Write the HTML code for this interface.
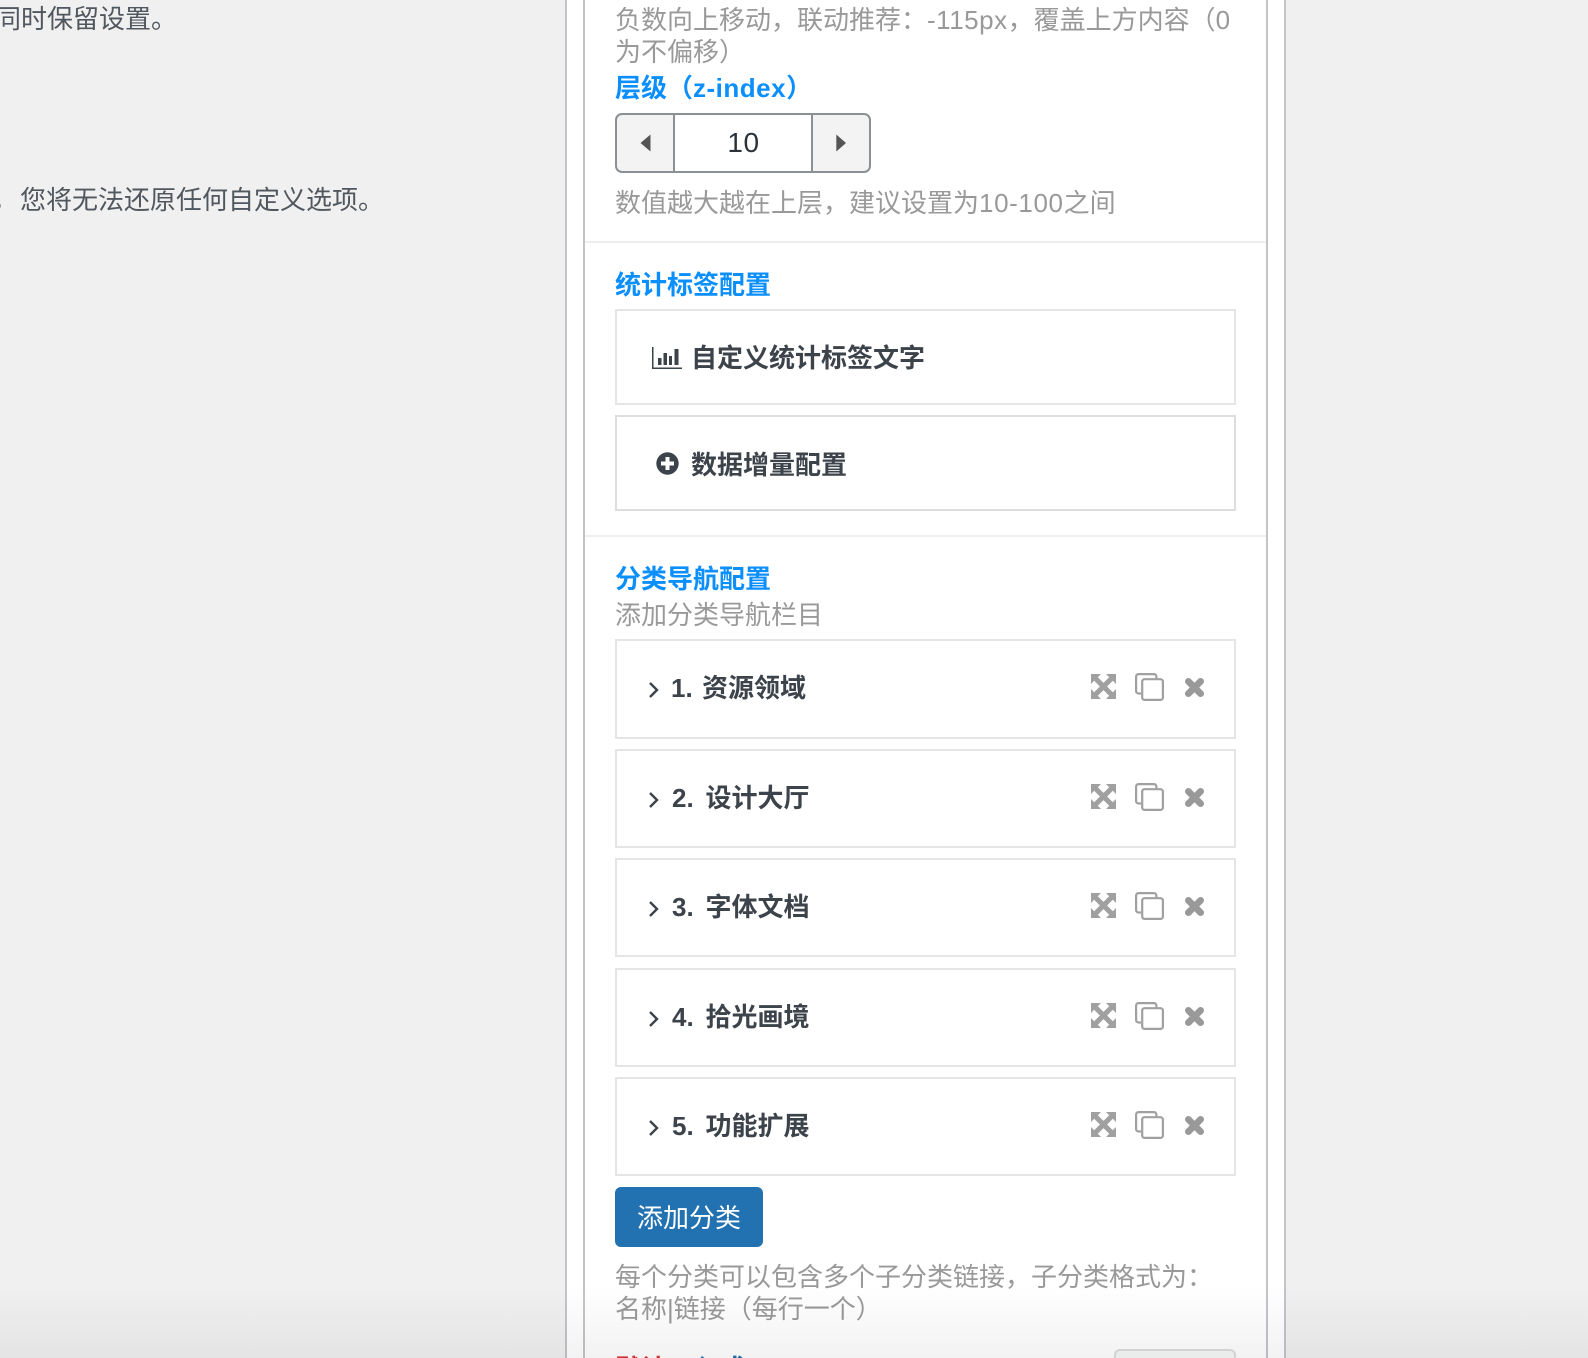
<!DOCTYPE html>
<html lang="zh-CN"><head><meta charset="utf-8"><title>设置</title>
<style>
html,body{margin:0;padding:0;width:1588px;height:1358px;overflow:hidden;background:#f0f0f0}
body{position:relative;font-family:"Liberation Sans","Noto Sans CJK SC",sans-serif;font-size:26px;color:#3c434a}
.a{position:absolute}
.t{position:absolute;line-height:32px;height:32px;white-space:nowrap}
.g{color:#999}
.l{color:#0b8ffd;font-weight:700}
.b{font-weight:700;color:#3c434a}
.box{position:absolute;left:615px;width:617px;background:#fff;border:2px solid #e5e5e5}
.d{position:absolute;left:585px;width:681px;height:2px;background:#eee}
svg{position:absolute;overflow:visible}
</style></head><body>
<svg width="0" height="0" style="position:absolute"><defs>
<symbol id="mv" viewBox="0 0 25 25" overflow="visible"><path fill="#a0a0a0" d="M0 0H10L6.8 3.2 12.5 8.9 18.2 3.2 15 0H25V10L21.8 6.8 16.1 12.5 21.8 18.2 25 15V25H15L18.2 21.8 12.5 16.1 6.8 21.8 10 25H0V15L3.2 18.2 8.9 12.5 3.2 6.8 0 10Z"/></symbol>
<symbol id="cp" viewBox="0 0 29 28" overflow="visible"><path fill="none" stroke="#a0a0a0" stroke-width="2.2" d="M6 20.5H3.5A2.4 2.4 0 0 1 1.1 18V3.5A2.4 2.4 0 0 1 3.5 1.1H19A2.4 2.4 0 0 1 21.4 3.5V6"/><rect x="7.2" y="6.2" width="20.7" height="20.7" rx="2.4" fill="none" stroke="#a0a0a0" stroke-width="2.2"/></symbol>
<symbol id="xx" viewBox="0 0 19 19" overflow="visible"><path fill="none" stroke="#999" stroke-width="6.8" stroke-linecap="round" d="M3.4 3.4L15.6 15.6M15.6 3.4L3.4 15.6"/></symbol>
<symbol id="ch" viewBox="0 0 9 16" overflow="visible"><path fill="none" stroke="#3c434a" stroke-width="2.4" d="M1 1L8 8 1 15"/></symbol>
</defs></svg>

<div class="t" style="left:-5px;top:3px;color:#50575e">同时保留设置。</div>
<div class="t" style="left:-8px;top:184px;color:#50575e">，</div>
<div class="t" style="left:20px;top:184px;color:#50575e">您将无法还原任何自定义选项。</div>

<div class="a" style="left:565px;top:0;height:1358px;background:#fff;border-left:2px solid #c3c4c7;border-right:2px solid #c3c4c7;width:717px"></div>
<div class="a" style="left:583px;top:0;width:681px;height:1358px;background:#fff;border-left:2px solid #c3c4c7;border-right:2px solid #c3c4c7"></div>

<div class="t g" style="left:615px;top:4px">负数向上移动，联动推荐：<span style="letter-spacing:.5px">-115px</span>，覆盖上方内容（0</div>
<div class="t g" style="left:615px;top:36px">为不偏移）</div>
<div class="t l" style="left:615px;top:72px">层级（<span style="letter-spacing:.5px">z-index</span>）</div>

<div class="a" style="left:615px;top:113px;width:256px;height:60px;box-sizing:border-box;border:2px solid #8c8f94;border-radius:7px;background:#f3f3f3"></div>
<div class="a" style="left:673px;top:115px;width:136px;height:56px;background:#fff;border-left:2px solid #8c8f94;border-right:2px solid #8c8f94"></div>
<svg style="left:640px;top:134px" width="11" height="18"><path fill="#555" d="M10.5 .5V17.5L.5 9Z"/></svg>
<svg style="left:836px;top:134px" width="11" height="18"><path fill="#555" d="M.3 .5V17.5L10 9Z"/></svg>
<div class="t" style="left:674px;top:127px;width:139px;text-align:center;font-size:28px;letter-spacing:.5px;color:#2c3338">10</div>

<div class="t g" style="left:615px;top:186.5px">数值越大越在上层，建议设置为<span style="letter-spacing:.6px">10-100</span>之间</div>
<div class="d" style="top:241px"></div>

<div class="t l" style="left:615px;top:269px">统计标签配置</div>
<div class="box" style="top:309px;height:92px"></div>
<svg style="left:652px;top:347px" width="30" height="22"><path fill="#3c434a" d="M0 0H1.5V20.5H30V22H0Z"/><path fill="#3c434a" d="M6 11H9.5V18H6ZM11.5 6H15V18H11.5ZM17 9H20V18H17ZM22.5 2H26.5V18H22.5Z"/></svg>
<div class="t b" style="left:691px;top:342px">自定义统计标签文字</div>
<div class="box" style="top:415px;height:92px;border-color:#ddd"></div>
<svg style="left:656px;top:452px" width="23" height="23"><circle cx="11.5" cy="11.5" r="11.2" fill="#3c434a"/><path fill="#fff" d="M9.5 5H13.5V9.5H18V13.5H13.5V18H9.5V13.5H5V9.5H9.5Z"/></svg>
<div class="t b" style="left:691px;top:449px">数据增量配置</div>
<div class="d" style="top:535px"></div>

<div class="t l" style="left:615px;top:563px">分类导航配置</div>
<div class="t g" style="left:615px;top:599px">添加分类导航栏目</div>

<div class="box" style="top:639px;height:96px"></div>
<svg style="left:649px;top:682px" width="9" height="16"><use href="#ch"/></svg>
<div class="t b" style="left:671px;top:672px">1.</div><div class="t b" style="left:702px;top:672px">资源领域</div>
<svg style="left:1091px;top:674px" width="25" height="25"><use href="#mv"/></svg>
<svg style="left:1135px;top:673px" width="29" height="28"><use href="#cp"/></svg>
<svg style="left:1185px;top:678px" width="19" height="19"><use href="#xx"/></svg>

<div class="box" style="top:749px;height:95px"></div>
<svg style="left:649px;top:791.5px" width="9" height="16"><use href="#ch"/></svg>
<div class="t b" style="left:672px;top:782px">2.</div><div class="t b" style="left:705.5px;top:782px">设计大厅</div>
<svg style="left:1091px;top:784px" width="25" height="25"><use href="#mv"/></svg>
<svg style="left:1135px;top:783px" width="29" height="28"><use href="#cp"/></svg>
<svg style="left:1185px;top:788px" width="19" height="19"><use href="#xx"/></svg>

<div class="box" style="top:858px;height:95px"></div>
<svg style="left:649px;top:901px" width="9" height="16"><use href="#ch"/></svg>
<div class="t b" style="left:672px;top:891px">3.</div><div class="t b" style="left:705.5px;top:891px">字体文档</div>
<svg style="left:1091px;top:893px" width="25" height="25"><use href="#mv"/></svg>
<svg style="left:1135px;top:892px" width="29" height="28"><use href="#cp"/></svg>
<svg style="left:1185px;top:897px" width="19" height="19"><use href="#xx"/></svg>

<div class="box" style="top:968px;height:95px"></div>
<svg style="left:649px;top:1010.5px" width="9" height="16"><use href="#ch"/></svg>
<div class="t b" style="left:672px;top:1001px">4.</div><div class="t b" style="left:705.5px;top:1001px">拾光画境</div>
<svg style="left:1091px;top:1003px" width="25" height="25"><use href="#mv"/></svg>
<svg style="left:1135px;top:1002px" width="29" height="28"><use href="#cp"/></svg>
<svg style="left:1185px;top:1007px" width="19" height="19"><use href="#xx"/></svg>

<div class="box" style="top:1077px;height:95px"></div>
<svg style="left:649px;top:1120px" width="9" height="16"><use href="#ch"/></svg>
<div class="t b" style="left:672px;top:1110px">5.</div><div class="t b" style="left:705.5px;top:1110px">功能扩展</div>
<svg style="left:1091px;top:1112px" width="25" height="25"><use href="#mv"/></svg>
<svg style="left:1135px;top:1111px" width="29" height="28"><use href="#cp"/></svg>
<svg style="left:1185px;top:1116px" width="19" height="19"><use href="#xx"/></svg>

<div class="a" style="left:615px;top:1187px;width:148px;height:60px;background:#2271b1;border-radius:6px"></div>
<div class="t" style="left:615px;top:1202px;width:148px;text-align:center;color:#fff">添加分类</div>

<div class="t g" style="left:615px;top:1260.5px">每个分类可以包含多个子分类链接，子分类格式为：</div>
<div class="t g" style="left:615px;top:1293px">名称|链接（每行一个）</div>

<div class="t" style="left:615px;top:1353px;color:#d63638;font-weight:700">默认</div>
<div class="t" style="left:693px;top:1353px;color:#2271b1;font-weight:700">入式</div>
<div class="a" style="left:1114px;top:1349px;width:122px;height:40px;box-sizing:border-box;background:#f6f7f7;border:2px solid #ddd;border-radius:6px"></div>

<div class="a" style="left:0;top:1285px;width:1588px;height:73px;background:linear-gradient(to bottom,rgba(0,0,0,0),rgba(0,0,0,.05))"></div>
</body></html>
